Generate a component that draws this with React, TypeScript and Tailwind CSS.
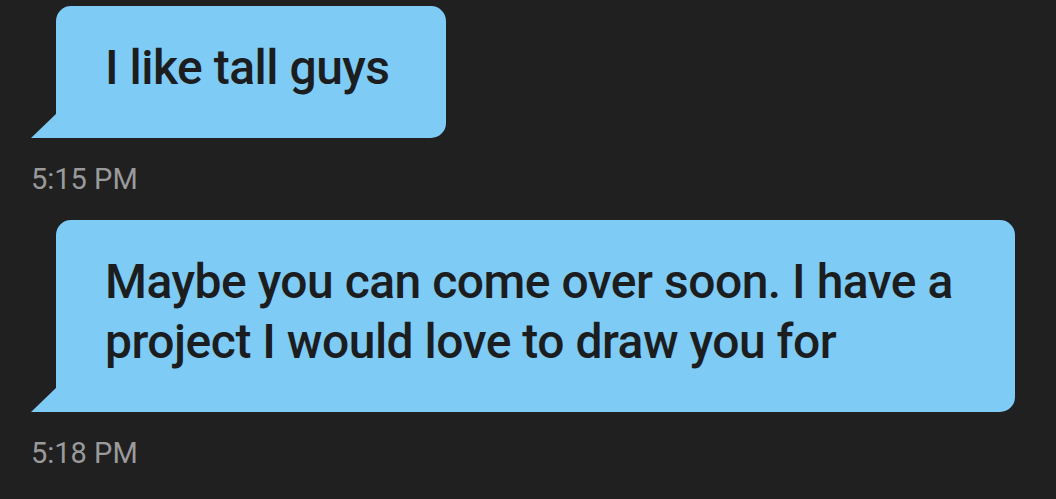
type Message = {
  id: number;
  text: string;
  time: string;
};

const messages: Message[] = [
  { id: 1, text: 'I like tall guys', time: '5:15 PM' },
  {
    id: 2,
    text: 'Maybe you can come over soon. I have a project I would love to draw you for',
    time: '5:18 PM',
  },
];

function BubbleTail() {
  return (
    <svg
      className="absolute bottom-0 -left-[25px] h-[25px] w-[26px]"
      viewBox="0 0 26 25"
    >
      <path d="M0 25 L26 25 L26 0 Z" fill="#7ecbf5" />
    </svg>
  );
}

function IncomingMessage({ message }: { message: Message }) {
  return (
    <div className="flex flex-col items-start">
      <div className="relative ml-[56px] max-w-[959px] rounded-[15px] rounded-bl-none bg-[#7ecbf5] pt-[32px] pb-[40px] pl-[49px] pr-[56px]">
        <BubbleTail />
        <p className="font-['Roboto',sans-serif] text-[48px] leading-[60px] font-medium tracking-[-0.5px] text-[#1c1d1f]">
          {message.text}
        </p>
      </div>
      <span className="mt-[23px] ml-[31px] font-['Roboto',sans-serif] text-[29px] leading-[36px] text-[#9a9a9c]">
        {message.time}
      </span>
    </div>
  );
}

export default function App() {
  return (
    <div className="h-[499px] w-full overflow-hidden bg-[#202020] pt-[6px]">
      <div className="flex flex-col gap-[23px]">
        {messages.map((message) => (
          <IncomingMessage key={message.id} message={message} />
        ))}
      </div>
    </div>
  );
}
